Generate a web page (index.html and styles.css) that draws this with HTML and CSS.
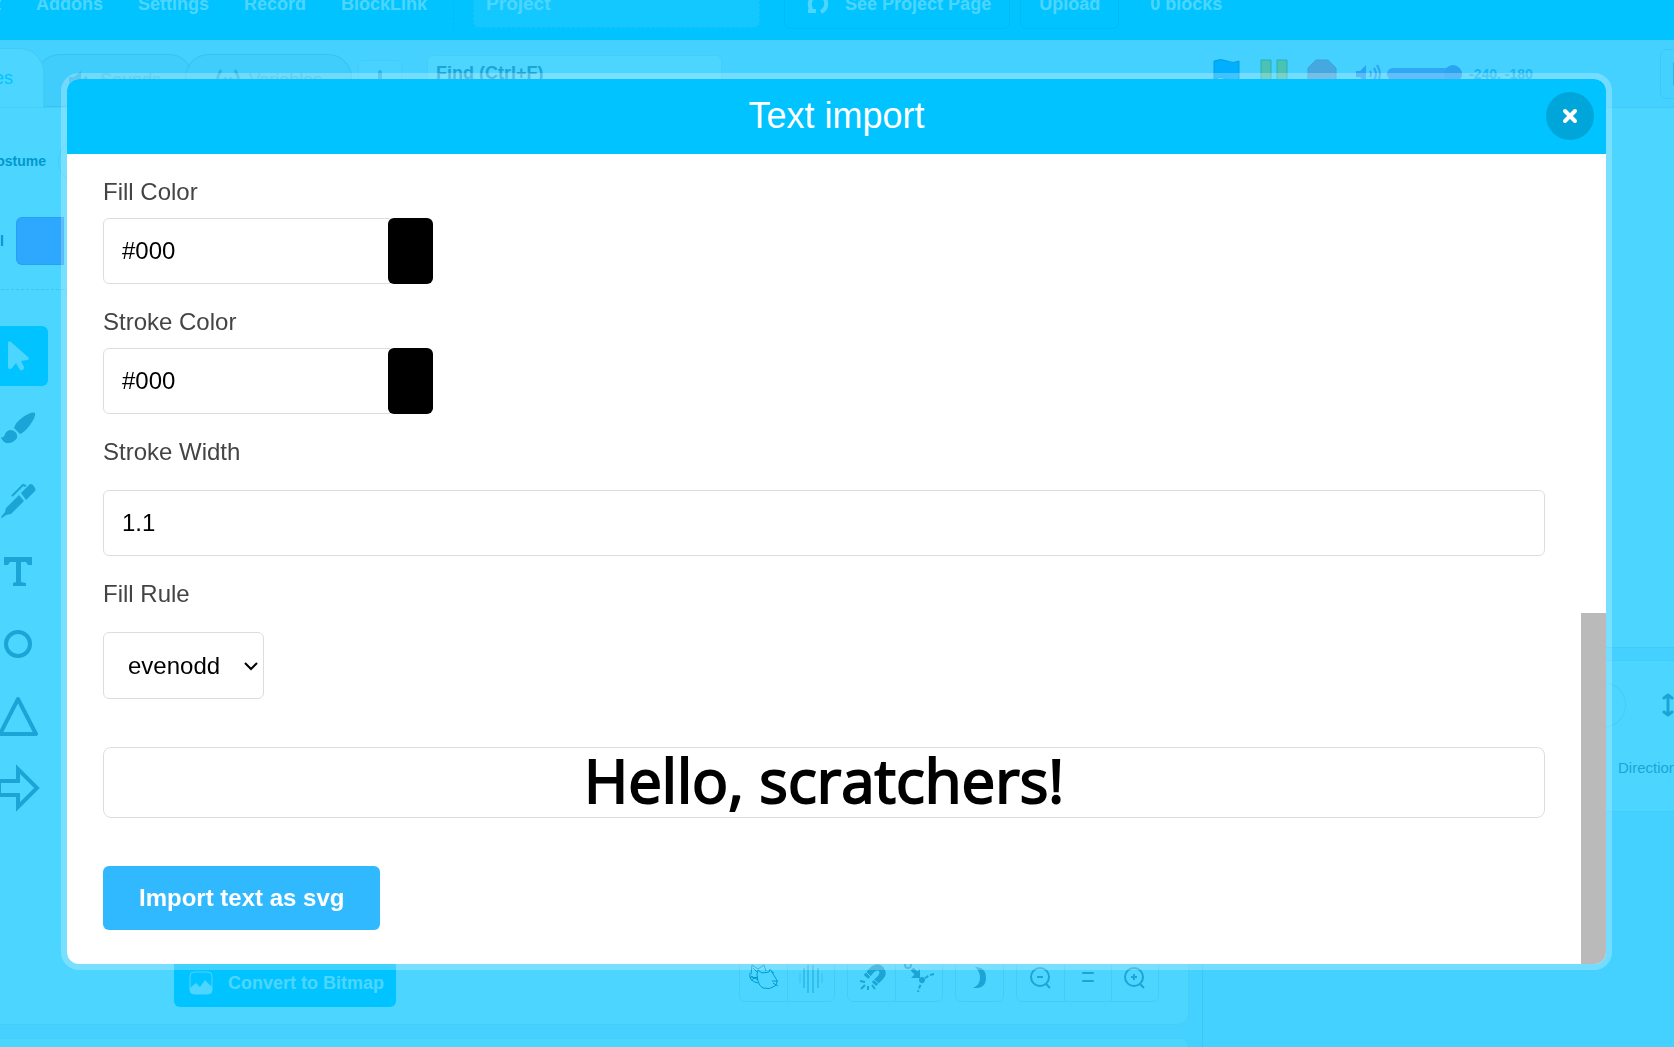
FILE: index.html
```html
<!DOCTYPE html>
<html lang="en">
<head>
<meta charset="utf-8">
<title>Text import</title>
<link rel="stylesheet" href="styles.css">
</head>
<body>
<div class="page">
  <div class="app" inert>
    <nav class="menubar">
      <div class="menu">
        <a href="#">Edit</a>
        <a href="#">Addons</a>
        <a href="#">Settings</a>
        <a href="#">Record</a>
        <a href="#">BlockLink</a>
      </div>
      <span class="menu-divider"></span>
      <input class="project-name" type="text" value="Project" aria-label="Project name">
      <div class="menu-buttons">
        <button class="menu-button" type="button">
          <svg width="22" height="22" viewBox="0 0 22 22" fill="none" stroke="#fff" stroke-width="4"><path d="M8 3C2 6 1 13 6 19M1 18h8M14 19c6-3 7-10 2-16M21 3h-7"/></svg>
          See Project Page
        </button>
        <button class="menu-button" type="button">Upload</button>
      </div>
      <span class="block-count">0 blocks</span>
    </nav>

    <div class="workspace">
      <div class="editor">
        <div class="tabs">
          <button class="tab tab-active" type="button">Costumes</button>
          <button class="tab tab-sounds" type="button">
            <svg width="24" height="22" viewBox="0 0 24 22" fill="#8a95ac"><path d="M1 7h5l7-6v20l-7-6H1z"/><path d="M17 7q3 4 0 8" fill="none" stroke="#8a95ac" stroke-width="3"/></svg>
            Sounds
          </button>
          <button class="tab tab-variables" type="button">
            <svg width="26" height="24" viewBox="0 0 26 24" fill="none" stroke="#8a95ac" stroke-width="3"><path d="M6 1Q-1 12 6 23M20 1q7 11 0 22M9 9l8 7M17 9l-8 7"/></svg>
            Variables
          </button>
          <button class="tab-tool" type="button" aria-label="Download">
            <svg width="20" height="26" viewBox="0 0 20 26" fill="none" stroke="#8a95ac" stroke-width="4" stroke-linecap="round"><path d="M10 3v18M3 15l7 7 7-7"/></svg>
          </button>
          <input class="find" type="text" placeholder="Find (Ctrl+F)" aria-label="Find">
        </div>

        <div class="paint">
          <div class="paint-row">
            <label class="paint-label" for="costume">Costume</label>
            <input class="costume-name" id="costume" type="text">
          </div>
          <div class="paint-row paint-row-fill">
            <span class="fill-label">Fill</span>
            <button class="fill-swatch" type="button" aria-label="Fill"></button>
          </div>
          <div class="tools">
            <button class="tool tool-active" type="button" aria-label="Select">
              <svg width="40" height="40" viewBox="0 0 40 40" fill="#fff"><path d="M10 7q0-3 3-1l17 15q2 3-1 3l-6 1 3 6q0 4-4 3l-4-7-4 5q-4 3-4-2z"/></svg>
            </button>
            <button class="tool" type="button" aria-label="Brush">
              <svg width="40" height="40" viewBox="0 0 40 40" fill="#575e75"><path d="M37 5q1 4-5 12-6 8-10 9l-6-6q1-5 9-11 9-6 12-4z"/><path d="M13 22q7 1 6 8-4 6-11 5-4-2-5-6 3 1 4-3 2-4 6-4z"/></svg>
            </button>
            <button class="tool" type="button" aria-label="Pen">
              <svg width="40" height="40" viewBox="0 0 40 40" fill="#575e75"><path d="M23 13l8-8q2-2 4 0l2 3q1 2 0 3l-9 9zM21 15l5 6-13 13-5 1-4 3-1-1 4-5 1-4z"/><path d="M14 16L25 5l3 1" fill="none" stroke="#575e75" stroke-width="2"/></svg>
            </button>
            <button class="tool" type="button" aria-label="Text">
              <svg width="40" height="40" viewBox="0 0 40 40" fill="#575e75"><path d="M6 5h28v8h-4l-2-3h-5v20l5 1v3H15v-3l3-1V10h-6l-2 3H6z"/></svg>
            </button>
            <button class="tool" type="button" aria-label="Circle">
              <svg width="40" height="40" viewBox="0 0 40 40" fill="none" stroke="#575e75" stroke-width="4"><circle cx="20" cy="20" r="12"/></svg>
            </button>
            <button class="tool" type="button" aria-label="Triangle">
              <svg width="40" height="40" viewBox="0 0 40 40" fill="none" stroke="#575e75" stroke-width="4" stroke-linejoin="round"><path d="M20 3l18 35H2z"/></svg>
            </button>
            <button class="tool" type="button" aria-label="Arrow">
              <svg width="46" height="48" viewBox="0 0 46 48" fill="none" stroke="#575e75" stroke-width="4"><path d="M4 17h19V5l19 19-19 19V31H4z"/></svg>
            </button>
          </div>
          <div class="canvas-controls">
            <button class="convert" type="button">
              <svg width="24" height="24" viewBox="0 0 24 24"><rect x="1" y="1" width="22" height="22" rx="4" fill="none" stroke="#fff"/><path d="M1 17l6-5 4 4 5-7 7 7v4q-1 3-4 3H5q-4-1-4-3z" fill="#fff"/></svg>
              Convert to Bitmap
            </button>
            <div class="control-groups">
              <div class="group">
                <button type="button" aria-label="Onion skin">
                  <svg width="32" height="32" viewBox="0 0 32 32" fill="none" stroke="#003b66" stroke-width="1"><path d="M3 12L4 3l6 4 6-4 2 6M2 11q-2 8 8 10M2 15l8 1M5 6l4 4M3 18l6-3"/><path d="M10 19q-2-7 0-11l4 3 7-1 1-3 5 8q4 5 0 9-5 4-12 2-4-2-5-7z"/><path d="M24 19l6 0M25 21l5 3M3 14l7 4M23 9l3 2"/></svg>
                </button>
                <button type="button" aria-label="Symmetry">
                  <svg width="32" height="32" viewBox="0 0 32 32" stroke="#575e75"><path d="M13 3v28M18 3v28M9 6v20M23 6v20"/><path opacity=".4" d="M5 11v10M27 11v10"/></svg>
                </button>
              </div>
              <div class="group">
                <button type="button" aria-label="Snapping">
                  <svg width="32" height="32" viewBox="0 0 32 32" fill="none" stroke="#575e75" stroke-width="6"><path d="M10 15l5-6q6-6 10-2 4 5-2 10l-5 5"/><path stroke-width="2" d="M4 19l5 1M5 27l4-4M12 28v-4M19 27l-3-4"/><path stroke="#fff" stroke-width="1" d="M9 9l6 6M17 17l6 5"/></svg>
                </button>
                <button type="button" aria-label="Snap to point">
                  <svg width="32" height="32" viewBox="0 0 32 32" fill="none" stroke="#575e75" stroke-width="2"><circle cx="5" cy="3" r="3"/><path d="M9 7l6 6" stroke-width="4"/><path d="M17 7v9H8z" fill="#575e75" stroke="none"/><circle cx="19" cy="18" r="2" fill="#575e75"/><path stroke-dasharray="4 2" d="M31 12q-12 2-16 18"/></svg>
                </button>
              </div>
              <div class="group">
                <button type="button" aria-label="Dark canvas">
                  <svg width="24" height="24" viewBox="0 0 24 24" fill="#575e75"><path d="M7 1q11 0 11 11T5 22q7-3 7-10T7 1z"/></svg>
                </button>
              </div>
              <div class="group">
                <button type="button" aria-label="Zoom out">
                  <svg width="24" height="24" viewBox="0 0 24 24" fill="none" stroke="#575e75" stroke-width="2"><circle cx="11" cy="11" r="9"/><path d="M17 18l4 4M8 11h6"/></svg>
                </button>
                <button type="button" aria-label="Reset zoom">
                  <svg width="24" height="24" viewBox="0 0 24 24" stroke="#575e75" stroke-width="2" stroke-linecap="round"><path d="M7 7h10M7 15h10"/></svg>
                </button>
                <button type="button" aria-label="Zoom in">
                  <svg width="24" height="24" viewBox="0 0 24 24" fill="none" stroke="#575e75" stroke-width="2"><circle cx="11" cy="11" r="9"/><path d="M17 18l4 4M8 11h6M11 8v6"/></svg>
                </button>
              </div>
            </div>
          </div>
        </div>
        <div class="backpack"></div>
      </div>

      <div class="side">
        <div class="stage-header">
          <svg width="28" height="30" viewBox="0 0 28 30" fill="#0080ff" stroke="#004f9e"><path d="M1 28V2q7-3 13 0t12 0v18q-6 3-12 0T1 20"/></svg>
          <svg width="28" height="30" viewBox="0 0 28 30" fill="#ffbf00" stroke="#7c8a20"><path d="M1 1h10v28H1zM17 1h10v28H17z"/></svg>
          <svg width="30" height="30" viewBox="0 0 30 30" fill="#e66b95" stroke="#b85880"><path d="M9 1h12l8 8v12l-8 8H9l-8-8V9z"/></svg>
          <div class="volume">
            <svg width="26" height="22" viewBox="0 0 26 22" fill="#855cd6"><path d="M0 8h4l6-6v18l-6-6H0z"/><path d="M14 8q2 3 0 6M18 5q4 6 0 12M21 2q6 9 0 18" fill="none" stroke="#855cd6" stroke-width="2"/></svg>
            <input class="slider" type="range" min="0" max="100" value="100" aria-label="Volume">
          </div>
          <span class="coords">-240, -180</span>
          <button class="fullscreen" type="button" aria-label="Full screen">
            <svg width="24" height="24" viewBox="0 0 24 24" fill="none" stroke="#333b55" stroke-width="3"><rect x="2" y="2" width="20" height="20"/></svg>
          </button>
        </div>
        <div class="stage"></div>
        <div class="targets">
          <div class="sprite-info">
            <div class="sprite-row">
              <input class="sprite-x" type="text" aria-label="x">
              <svg width="12" height="24" viewBox="0 0 12 24" fill="none" stroke="#575e75" stroke-width="3" stroke-linecap="round" stroke-linejoin="round"><path d="M6 3v18M2 5l4-3 4 3M2 19l4 3 4-3"/></svg>
            </div>
            <span class="direction">Direction</span>
          </div>
        </div>
      </div>
    </div>
  </div>

  <div class="overlay">
    <div class="modal" role="dialog" aria-labelledby="modal-title">
      <header class="modal-header">
        <h1 class="modal-title" id="modal-title">Text import</h1>
        <button class="close" type="button" aria-label="Close">
          <svg width="16" height="16" viewBox="0 0 16 16" stroke="#fff" stroke-width="4" stroke-linecap="round"><path d="M3 3l10 10M13 3L3 13"/></svg>
        </button>
      </header>
      <div class="modal-body">
        <form class="form">
          <label class="label" for="fill-color">Fill Color</label>
          <div class="color-field">
            <input class="field" id="fill-color" type="text" value="#000">
            <button class="swatch" type="button" aria-label="Pick fill color"></button>
          </div>
          <label class="label" for="stroke-color">Stroke Color</label>
          <div class="color-field">
            <input class="field" id="stroke-color" type="text" value="#000">
            <button class="swatch" type="button" aria-label="Pick stroke color"></button>
          </div>
          <label class="label" for="stroke-width">Stroke Width</label>
          <input class="field field-wide" id="stroke-width" type="text" value="1.1">
          <label class="label" for="fill-rule">Fill Rule</label>
          <div class="select-field">
            <select class="select" id="fill-rule">
              <option>evenodd</option>
              <option>nonzero</option>
            </select>
            <svg class="select-arrow" width="14" height="9" viewBox="0 0 14 9" fill="none" stroke="#000" stroke-width="2"><path d="M1 1l6 6 6-6"/></svg>
          </div>
          <div class="preview">Hello, scratchers!</div>
          <button class="import" type="button">Import text as svg</button>
        </form>
        <div class="scrollbar"><div class="scrollbar-thumb"></div></div>
      </div>
    </div>
  </div>
</div>
</body>
</html>
```
FILE: styles.css
```css
* {
  box-sizing: border-box;
}

body {
  margin: 0;
  font-family: "Liberation Sans", Arial, sans-serif;
}

button,
input,
select {
  margin: 0;
  font-family: inherit;
}

button {
  padding: 0;
  border: 0;
  background: none;
}

svg {
  flex: none;
  display: block;
}

.page {
  height: 100vh;
  overflow: hidden;
}

/* The editor behind the dialog, scrolled a little down and to the right */
.app {
  display: flex;
  flex-direction: column;
  height: calc(100vh + 32px);
  margin: -32px -100px 0;
  background: #e5f0ff;
  color: #575e75;
}

.menubar {
  flex: none;
  display: flex;
  align-items: center;
  height: 72px;
  padding-left: 67px;
  background: #00c3ff;
  color: #fff;
  font-size: 18px;
  font-weight: bold;
}

.menu {
  display: flex;
  gap: 35px;
}

.menu a {
  color: inherit;
  text-decoration: none;
}

.menu-divider {
  height: 52px;
  margin: 0 19px 0 26px;
  border-left: 1px dashed rgba(0, 0, 0, 0.15);
}

.project-name {
  width: 287px;
  height: 48px;
  padding: 0 12px;
  border: 1px dashed rgba(0, 0, 0, 0.15);
  border-radius: 6px;
  background: rgba(255, 255, 255, 0.25);
  color: #fff;
  font-size: 19px;
  font-weight: bold;
}

.menu-buttons {
  display: flex;
  gap: 10px;
  margin: 0 31px 0 24px;
}

.menu-button {
  display: flex;
  align-items: center;
  gap: 16px;
  height: 50px;
  padding: 0 18px 0 22px;
  border: 1px solid rgba(0, 0, 0, 0.15);
  border-radius: 6px;
  color: #fff;
  font-size: 18px;
  font-weight: bold;
}

.menu-button + .menu-button {
  padding: 0 18px;
}

.workspace {
  flex: 1;
  display: flex;
  gap: 13px;
  min-height: 0;
}

.editor {
  flex: 1;
  display: flex;
  flex-direction: column;
  min-width: 0;
}

.tabs {
  flex: none;
  display: flex;
  align-items: flex-end;
  height: 67px;
}

.tab {
  display: flex;
  align-items: center;
  justify-content: center;
  gap: 8px;
  height: 53px;
  margin-left: -8px;
  border: 1px solid rgba(0, 0, 0, 0.15);
  border-radius: 24px 24px 0 0;
  background: #d9e3f2;
  color: #a3adc0;
  font-size: 18px;
}

.tab-active {
  z-index: 1;
  justify-content: flex-end;
  width: 144px;
  height: 59px;
  margin-left: 0;
  padding-right: 30px;
  border-bottom: 0;
  background: #fff;
  color: #00c3ff;
}

.tab-sounds {
  width: 157px;
}

.tab-variables {
  width: 167px;
}

.tab-tool {
  display: flex;
  align-items: center;
  justify-content: center;
  width: 44px;
  height: 44px;
  margin: 0 25px 3px 6px;
  border: 1px solid rgba(0, 0, 0, 0.08);
  border-radius: 6px;
  background: #edf5ff;
}

.find {
  align-self: flex-start;
  width: 295px;
  height: 36px;
  margin-top: 15px;
  padding: 0 8px;
  border: 1px solid rgba(0, 0, 0, 0.1);
  border-radius: 6px;
  background: #fff;
  font-size: 18px;
  font-weight: bold;
}

.find::placeholder {
  color: #575e75;
}

.paint {
  flex: 1;
  display: flex;
  flex-direction: column;
  padding: 30px 29px 17px 0;
  border: 1px solid rgba(0, 0, 0, 0.1);
  border-radius: 0 0 12px 0;
  background: #fff;
}

.paint-row {
  display: flex;
  align-items: center;
  gap: 12px;
  padding-bottom: 33px;
}

.paint-label {
  width: 145px;
  color: #002f55;
  font-size: 14px;
  font-weight: bold;
  text-align: right;
}

.costume-name {
  width: 200px;
  height: 46px;
  border: 1px solid rgba(0, 0, 0, 0.1);
  border-radius: 23px;
}

.paint-row-fill {
  padding-bottom: 24px;
  border-bottom: 1px dashed #b9cbe0;
}

.fill-label {
  width: 103px;
  color: #002f55;
  font-size: 14px;
  font-weight: bold;
  text-align: right;
}

.fill-swatch {
  width: 48px;
  height: 48px;
  border: 1px solid rgba(0, 0, 0, 0.2);
  border-radius: 6px 0 0 6px;
  background: #96f;
}

.tools {
  display: flex;
  flex-direction: column;
  gap: 12px;
  width: 60px;
  margin: 36px 0 0 87px;
}

.tool {
  display: flex;
  align-items: center;
  justify-content: center;
  height: 60px;
  border-radius: 6px;
}

.tool-active {
  background: #00c3ff;
}

.canvas-controls {
  display: flex;
  align-items: flex-end;
  justify-content: space-between;
  margin-top: auto;
  padding-left: 273px;
}

.convert {
  display: flex;
  align-items: center;
  gap: 15px;
  height: 48px;
  padding: 0 12px 0 15px;
  border-radius: 6px;
  background: #00c3ff;
  color: #fff;
  font-size: 18px;
  font-weight: bold;
}

.control-groups {
  display: flex;
  gap: 12px;
  padding-bottom: 5px;
}

.group {
  display: flex;
  border: 1px solid rgba(0, 0, 0, 0.12);
  border-radius: 6px;
}

.group button {
  display: flex;
  align-items: center;
  justify-content: center;
  width: 47px;
  height: 46px;
}

.group button + button {
  border-left: 1px solid rgba(0, 0, 0, 0.12);
}

.backpack {
  flex: none;
  height: 9px;
  margin-top: 13px;
  border: 1px solid rgba(0, 0, 0, 0.1);
  border-bottom: 0;
  border-radius: 0 12px 0 0;
  background: #fff;
}

.side {
  flex: none;
  display: flex;
  flex-direction: column;
  width: 572px;
}

.stage-header {
  display: flex;
  align-items: center;
  gap: 19px;
  height: 67px;
  padding-left: 11px;
}

.volume {
  display: flex;
  align-items: center;
  gap: 5px;
}

.slider {
  appearance: none;
  width: 75px;
  height: 12px;
  margin: 0;
  border-radius: 6px;
  background: #9966e0;
}

.slider::-webkit-slider-thumb {
  appearance: none;
  width: 18px;
  height: 18px;
  border-radius: 50%;
  background: #855cd6;
}

.coords {
  width: 172px;
  margin-left: -12px;
  color: #4c97d0;
  font-size: 14px;
  font-weight: bold;
}

.fullscreen {
  display: flex;
  align-items: center;
  justify-content: center;
  width: 50px;
  height: 50px;
  border: 1px solid rgba(0, 0, 0, 0.12);
  border-radius: 6px;
}

.stage {
  height: 541px;
  border: 1px solid rgba(0, 0, 0, 0.15);
  background: #fff;
}

.targets {
  flex: 1;
  padding-top: 12px;
  border-left: 1px solid rgba(0, 0, 0, 0.12);
}

.sprite-info {
  height: 152px;
  padding-top: 21px;
  border: 1px solid rgba(0, 0, 0, 0.12);
  background: #fff;
}

.sprite-row {
  display: flex;
  align-items: center;
  gap: 36px;
  padding-left: 320px;
}

.sprite-x {
  width: 102px;
  height: 46px;
  border: 1px solid rgba(0, 0, 0, 0.12);
  border-radius: 23px;
}

.direction {
  display: block;
  padding: 31px 0 0 414px;
  font-size: 15px;
}

/* Dialog */
.overlay {
  position: fixed;
  z-index: 2;
  inset: 0;
  padding: 73px 62px 0 61px;
  background: rgba(0, 195, 255, 0.7);
}

.modal {
  overflow: hidden;
  border: 6px solid rgba(255, 255, 255, 0.25);
  border-radius: 18px;
  background: #fff;
  background-clip: padding-box;
}

.modal-header {
  display: grid;
  grid-template-columns: 48px 1fr 48px;
  align-items: center;
  height: 75px;
  padding: 0 12px 1px;
  background: #00c3ff;
  color: #fff;
}

.modal-title {
  grid-column: 2;
  margin: 0;
  font-size: 36px;
  font-weight: normal;
  line-height: 40px;
  text-align: center;
}

.close {
  display: flex;
  align-items: center;
  justify-content: center;
  height: 48px;
  border-radius: 50%;
  background: rgba(0, 0, 0, 0.15);
}

.modal-body {
  display: flex;
}

.form {
  flex: 1;
  display: flex;
  flex-direction: column;
  align-items: flex-start;
  padding: 24px 36px 34px;
}

.label {
  color: #444;
  font-size: 24px;
  line-height: 28px;
}

.field {
  width: 291px;
  height: 66px;
  padding: 0 18px;
  border: 1px solid #ddd;
  border-radius: 6px;
  background: #fff;
  color: #000;
  font-size: 24px;
}

.color-field {
  display: flex;
  margin: 12px 0 24px;
}

.swatch {
  width: 45px;
  margin-left: -6px;
  border-radius: 6px;
  background: #000;
}

.field-wide {
  width: 100%;
  margin: 24px 0;
}

.select-field {
  position: relative;
  margin: 24px 0 48px;
}

.select {
  display: block;
  appearance: none;
  width: 161px;
  height: 67px;
  padding: 0 24px;
  border: 1px solid #ddd;
  border-radius: 6px;
  background: #fff;
  color: #000;
  font-size: 24px;
}

.select-arrow {
  position: absolute;
  top: 30px;
  right: 6px;
  pointer-events: none;
}

.preview {
  align-self: stretch;
  height: 71px;
  border: 1px solid #ddd;
  border-radius: 8px;
  color: #000;
  font-family: "Open Sans", sans-serif;
  font-size: 60px;
  line-height: 64px;
  text-align: center;
  -webkit-text-stroke: 2px #000;
}

.import {
  height: 64px;
  margin-top: 48px;
  padding: 0 36px;
  border-radius: 6px;
  background: #30b9ff;
  color: #fff;
  font-size: 24px;
  font-weight: bold;
}

.scrollbar {
  display: flex;
  flex-direction: column;
  justify-content: flex-end;
  width: 25px;
}

.scrollbar-thumb {
  height: 351px;
  background: #bababa;
}
```
